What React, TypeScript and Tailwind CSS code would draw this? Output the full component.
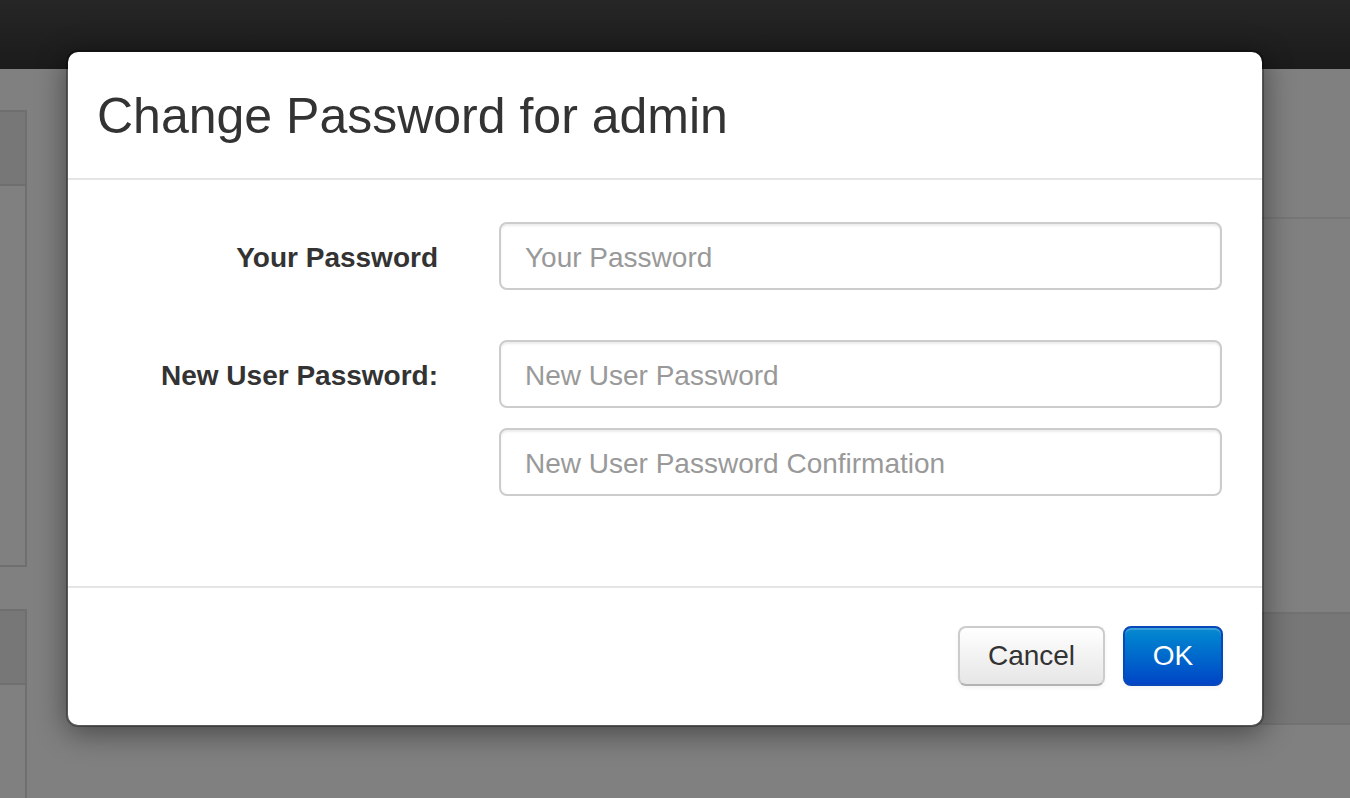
import React from 'react'

const font = { fontFamily: '"Liberation Sans", Arial, Helvetica, sans-serif' }

function Field({ placeholder }: { placeholder: string }) {
  return (
    <input
      type="password"
      placeholder={placeholder}
      className="w-full h-[68px] rounded-[8px] border-2 border-[#cccccc] bg-white px-[24px] pt-[3px] text-[28px] text-[#555555] placeholder:text-[#999999] shadow-[inset_0_2px_2px_rgba(0,0,0,0.075)] outline-none"
    />
  )
}

function Backdrop() {
  return (
    <div className="flex h-[729px]">
      {/* left column panels */}
      <div className="w-[27px] flex flex-col">
        <div className="mt-[41px] h-[457px] border-2 border-l-0 border-[#6f6f6f] flex flex-col">
          <div className="h-[74px] bg-[#777777] border-b-2 border-[#6f6f6f]"></div>
        </div>
        <div className="mt-[42px] flex-1 border-2 border-l-0 border-b-0 border-[#6f6f6f] flex flex-col">
          <div className="h-[74px] bg-[#777777] border-b-2 border-[#6f6f6f]"></div>
        </div>
      </div>
      <div className="flex-1"></div>
      {/* right column panels */}
      <div className="w-[110px] flex flex-col">
        <div className="mt-[148px] h-[395px] border-t-2 border-[#777777]"></div>
        <div className="h-[113px] bg-[#777777] border-y-2 border-[#727272]"></div>
      </div>
    </div>
  )
}

export default function App() {
  return (
    <div className="relative w-[1350px] h-[798px] overflow-hidden bg-[#808080]" style={font}>
      <div className="h-[69px] bg-gradient-to-b from-[#262626] to-[#1b1b1b]"></div>
      <Backdrop />

      {/* modal */}
      <div className="absolute left-[66px] top-[50px] w-[1198px] rounded-[12px] border-2 border-black/30 bg-white bg-clip-padding shadow-[0_6px_30px_rgba(0,0,0,0.45)]">
        <div className="h-[128px] flex items-center px-[29px] pt-[2px] border-b-2 border-[#e5e5e5]">
          <h3 className="text-[50px] leading-none text-[#333333]">Change Password for admin</h3>
        </div>

        <div className="px-[29px] pt-[42px] pb-[90px]">
          <div className="flex items-center">
            <label className="w-[341px] shrink-0 pt-[4px] text-right text-[28px] font-bold text-[#333333]">Your Password</label>
            <div className="ml-[61px] flex-1 pr-[11px]">
              <Field placeholder="Your Password" />
            </div>
          </div>

          <div className="flex items-start mt-[50px]">
            <label className="w-[341px] shrink-0 h-[68px] pt-[4px] flex items-center justify-end text-[28px] font-bold text-[#333333]">
              New User Password:
            </label>
            <div className="ml-[61px] flex-1 pr-[11px] flex flex-col gap-[20px]">
              <Field placeholder="New User Password" />
              <Field placeholder="New User Password Confirmation" />
            </div>
          </div>
        </div>

        <div className="border-t-2 border-[#e5e5e5] pt-[38px] pb-[39px] pr-[39px] flex justify-end gap-[18px]">
          <button className="h-[60px] w-[147px] rounded-[8px] border-2 border-[#cccccc] border-b-[#b3b3b3] bg-gradient-to-b from-white to-[#e6e6e6] text-[28px] text-[#333333] shadow-[inset_0_2px_0_rgba(255,255,255,0.2),0_2px_4px_rgba(0,0,0,0.05)]">
            Cancel
          </button>
          <button className="h-[60px] w-[100px] rounded-[8px] border-2 border-[#0a47b8] bg-gradient-to-b from-[#0a8ad0] to-[#0444c6] text-[28px] text-white shadow-[inset_0_2px_0_rgba(255,255,255,0.2),0_2px_4px_rgba(0,0,0,0.05)]">
            OK
          </button>
        </div>
      </div>
    </div>
  )
}
